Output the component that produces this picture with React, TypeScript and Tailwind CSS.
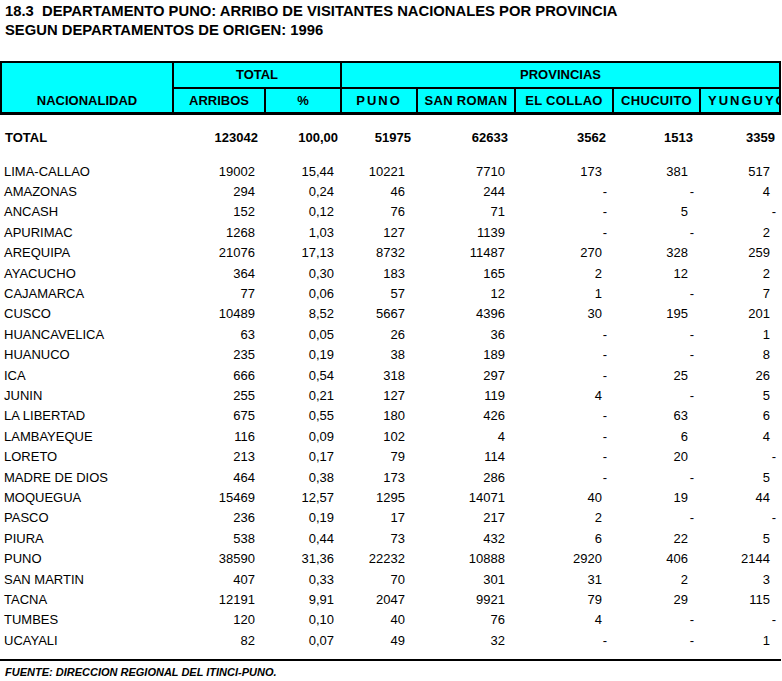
const rows: string[][] = [
  ["LIMA-CALLAO", "19002", "15,44", "10221", "7710", "173", "381", "517"],
  ["AMAZONAS", "294", "0,24", "46", "244", "-", "-", "4"],
  ["ANCASH", "152", "0,12", "76", "71", "-", "5", "-"],
  ["APURIMAC", "1268", "1,03", "127", "1139", "-", "-", "2"],
  ["AREQUIPA", "21076", "17,13", "8732", "11487", "270", "328", "259"],
  ["AYACUCHO", "364", "0,30", "183", "165", "2", "12", "2"],
  ["CAJAMARCA", "77", "0,06", "57", "12", "1", "-", "7"],
  ["CUSCO", "10489", "8,52", "5667", "4396", "30", "195", "201"],
  ["HUANCAVELICA", "63", "0,05", "26", "36", "-", "-", "1"],
  ["HUANUCO", "235", "0,19", "38", "189", "-", "-", "8"],
  ["ICA", "666", "0,54", "318", "297", "-", "25", "26"],
  ["JUNIN", "255", "0,21", "127", "119", "4", "-", "5"],
  ["LA LIBERTAD", "675", "0,55", "180", "426", "-", "63", "6"],
  ["LAMBAYEQUE", "116", "0,09", "102", "4", "-", "6", "4"],
  ["LORETO", "213", "0,17", "79", "114", "-", "20", "-"],
  ["MADRE DE DIOS", "464", "0,38", "173", "286", "-", "-", "5"],
  ["MOQUEGUA", "15469", "12,57", "1295", "14071", "40", "19", "44"],
  ["PASCO", "236", "0,19", "17", "217", "2", "-", "-"],
  ["PIURA", "538", "0,44", "73", "432", "6", "22", "5"],
  ["PUNO", "38590", "31,36", "22232", "10888", "2920", "406", "2144"],
  ["SAN MARTIN", "407", "0,33", "70", "301", "31", "2", "3"],
  ["TACNA", "12191", "9,91", "2047", "9921", "79", "29", "115"],
  ["TUMBES", "120", "0,10", "40", "76", "4", "-", "-"],
  ["UCAYALI", "82", "0,07", "49", "32", "-", "-", "1"],
];

const total = ["TOTAL", "123042", "100,00", "51975", "62633", "3562", "1513", "3359"];

// right padding per numeric column so figures line up with the sheet
const dataPad = ["pr-[9px]", "pr-[6px]", "pr-[11px]", "pr-[9px]", "pr-[10px]", "pr-[11px]", "pr-[11px]"];
const totalPad = ["pr-[6px]", "pr-[2px]", "pr-[5px]", "pr-[6px]", "pr-[6px]", "pr-[6px]", "pr-[6px]"];

const cols = "grid grid-cols-[172px_92px_76px_76px_98px_98px_87px_82px]";

export default function App() {
  return (
    <div className="w-[782px] h-[681px] bg-white text-black overflow-hidden font-['Liberation_Sans',Arial,sans-serif]">
      {/* title */}
      <div className="pl-[5px] pt-[2px] text-[14.8px] font-bold leading-[19px]">
        <div className="whitespace-nowrap">18.3&nbsp; DEPARTAMENTO PUNO: ARRIBO DE VISITANTES NACIONALES POR PROVINCIA</div>
        <div className="whitespace-nowrap">SEGUN DEPARTAMENTOS DE ORIGEN: 1996</div>
      </div>

      {/* header block */}
      <div className="mt-[21px] w-[781px] bg-black p-[2px] pb-[3px] grid grid-cols-[170px_90px_74px_74px_96px_96px_85px_78px] grid-rows-[24px_23px] gap-[2px] text-[13px] font-bold">
        <div className="row-span-2 bg-[#00ffff] flex flex-col justify-end">
          <div className="h-[23px] flex items-center justify-center">NACIONALIDAD</div>
        </div>
        <div className="col-span-2 bg-[#00ffff] flex items-center justify-center">TOTAL</div>
        <div className="col-span-5 bg-[#00ffff] flex items-center justify-center">PROVINCIAS</div>
        <div className="bg-[#00ffff] flex items-center justify-center">ARRIBOS</div>
        <div className="bg-[#00ffff] flex items-center justify-center">%</div>
        <div className="bg-[#00ffff] flex items-center justify-center tracking-[2px]">PUNO</div>
        <div className="bg-[#00ffff] flex items-center justify-center tracking-[0.3px]">SAN ROMAN</div>
        <div className="bg-[#00ffff] flex items-center justify-center tracking-[0.3px]">EL COLLAO</div>
        <div className="bg-[#00ffff] flex items-center justify-center tracking-[0.3px]">CHUCUITO</div>
        <div className="bg-[#00ffff] flex items-center pl-[7px] overflow-hidden whitespace-nowrap tracking-[2px]">YUNGUYO</div>
      </div>

      {/* total row */}
      <div className={`${cols} h-[46px] items-center text-[13px] font-bold`}>
        <div className="pl-[5px]">{total[0]}</div>
        {total.slice(1).map((v, i) => (
          <div key={i} className={`text-right ${totalPad[i]}`}>{v}</div>
        ))}
      </div>

      {/* data rows */}
      <div className="text-[13px]">
        {rows.map((r) => (
          <div key={r[0]} className={`${cols} h-[20.4px] items-center leading-none`}>
            <div className="pl-[4px] whitespace-nowrap">{r[0]}</div>
            {r.slice(1).map((v, i) => (
              <div key={i} className={`text-right ${v === "-" ? "pr-[5px]" : dataPad[i]}`}>{v}</div>
            ))}
          </div>
        ))}
      </div>

      {/* footer */}
      <div className="mt-[9px] w-[781px] h-[2px] bg-black" />
      <div className="pl-[5px] pt-[6px] text-[11px] font-bold italic leading-none">
        FUENTE: DIRECCION REGIONAL DEL ITINCI-PUNO.
      </div>
    </div>
  );
}
